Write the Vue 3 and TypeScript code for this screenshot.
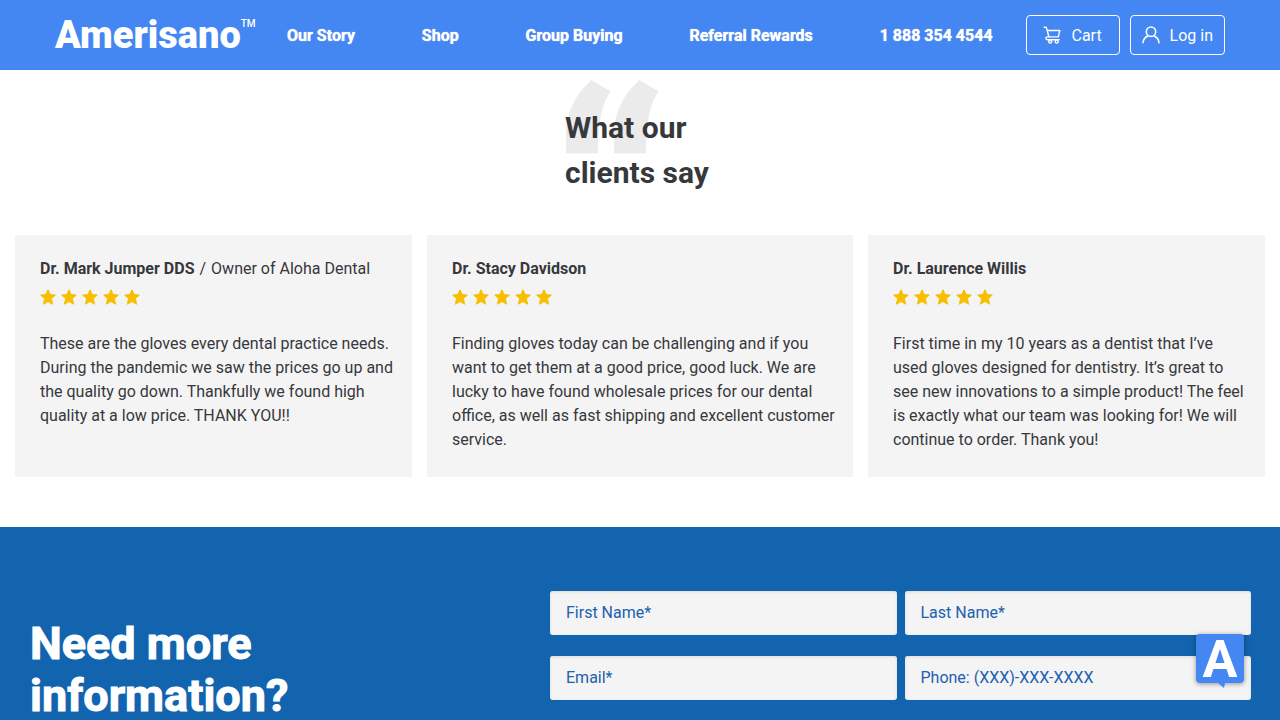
<script setup lang="ts">
interface Review {
  name: string
  role?: string
  text: string
}

interface Field {
  id: string
  type: string
  label: string
}

const links: string[] = ['Our Story', 'Shop', 'Group Buying', 'Referral Rewards', '1 888 354 4544']

const reviews: Review[] = [
  {
    name: 'Dr. Mark Jumper DDS',
    role: 'Owner of Aloha Dental',
    text: 'These are the gloves every dental practice needs. During the pandemic we saw the prices go up and the quality go down. Thankfully we found high quality at a low price. THANK YOU!!',
  },
  {
    name: 'Dr. Stacy Davidson',
    text: 'Finding gloves today can be challenging and if you want to get them at a good price, good luck. We are lucky to have found wholesale prices for our dental office, as well as fast shipping and excellent customer service.',
  },
  {
    name: 'Dr. Laurence Willis',
    text: 'First time in my 10 years as a dentist that I’ve used gloves designed for dentistry. It’s great to see new innovations to a simple product! The feel is exactly what our team was looking for! We will continue to order. Thank you!',
  },
]

const fields: Field[] = [
  { id: 'first-name', type: 'text', label: 'First Name*' },
  { id: 'last-name', type: 'text', label: 'Last Name*' },
  { id: 'email', type: 'email', label: 'Email*' },
  { id: 'phone', type: 'tel', label: 'Phone: (XXX)-XXX-XXXX' },
]
</script>

<template>
  <div class="page">
    <header class="header">
      <a class="logo" href="#"><span class="wordmark">Amerisano</span><span class="tm">TM</span></a>
      <nav class="nav">
        <a v-for="link in links" :key="link" href="#">{{ link }}</a>
      </nav>
      <div class="actions">
        <button type="button" class="action">
          <svg width="18" height="18" viewBox="0 0 18 18" fill="none" stroke="currentColor" stroke-width="1.4" stroke-linecap="round" stroke-linejoin="round">
            <path d="M1.200 1.200h1.300c.6 0 .9.3 1.100.9l.6 2.400h12.600l-1.500 6.400H5.900L4.200 4.500" />
            <path d="M5.900 10.900H4.500c-2.200 0-2.200 2.900 0 2.900h11.700" />
            <circle cx="7.200" cy="15.600" r="1.500" />
            <circle cx="13.700" cy="15.600" r="1.500" />
          </svg>
          <span>Cart</span>
        </button>
        <button type="button" class="action">
          <svg width="18" height="18" viewBox="0 0 18 18" fill="none" stroke="currentColor" stroke-width="1.6" stroke-linecap="round">
            <circle cx="9" cy="5.700" r="4.700" />
            <path d="M1 16.800c.3-3.400 2.300-5.800 5.200-7.100M17 16.800c-.3-3.400-2.300-5.800-5.200-7.100" />
          </svg>
          <span>Log in</span>
        </button>
      </div>
    </header>

    <section class="clients">
      <div class="title">
        <svg class="quote" width="94" height="74" viewBox="0 0 94 74" aria-hidden="true">
          <path d="M26.500 0 45.500 11.500C37 24 33 41 33 73.500H1V55C1 32 11 14 26.500 0Z" />
          <path d="M74.500 0 93.500 11.500C85 24 81 41 81 73.500H49V55C49 32 59 14 74.500 0Z" />
        </svg>
        <h2>What our<br />clients say</h2>
      </div>
      <div class="cards">
        <article v-for="review in reviews" :key="review.name" class="card">
          <h3>
            <strong>{{ review.name }}</strong>
            <template v-if="review.role"><span>/</span><span>{{ review.role }}</span></template>
          </h3>
          <div class="stars" role="img" aria-label="5 stars">
            <svg v-for="n in 5" :key="n" width="16" height="16" viewBox="0 0 16 16">
              <path d="M8 .8 10.100 5.600 15.300 6.100 11.400 9.600 12.600 15.200 8 12.500 3.400 15.200 4.600 9.600.7 6.100 5.900 5.600Z" />
            </svg>
          </div>
          <p>{{ review.text }}</p>
        </article>
      </div>
    </section>

    <section class="contact">
      <h2>Need more<br />information?</h2>
      <form class="form" @submit.prevent>
        <input v-for="field in fields" :id="field.id" :key="field.id" :type="field.type" :placeholder="field.label" :aria-label="field.label" />
      </form>
    </section>

    <button type="button" class="chat" aria-label="Open chat">
      <svg class="tail" width="8" height="6" viewBox="0 0 8 6" aria-hidden="true"><path d="M0 0H7L6 5Z" /></svg>
      <span>A</span>
    </button>
  </div>
</template>

<style>
body {
  margin: 0;
  background: #fff;
}
</style>

<style scoped>
.page {
  min-height: 100vh;
  display: flex;
  flex-direction: column;
  box-sizing: border-box;
  font-family: Roboto, "Liberation Sans", sans-serif;
  font-size: 16px;
  color: #37383c;
}

.header {
  height: 70px;
  box-sizing: border-box;
  padding: 0 55px;
  display: flex;
  align-items: center;
  background: #4487f2;
  color: #fff;
}

a {
  color: inherit;
  text-decoration: none;
}

.logo {
  width: 200px;
  display: flex;
  justify-content: space-between;
  align-items: flex-start;
  line-height: 46px;
}

.wordmark {
  font-size: 38px;
  font-weight: 900;
}

.tm {
  font-size: 10px;
  font-weight: 500;
  line-height: 24px;
}

.nav {
  flex: 1;
  margin: 0 33px 0 32px;
  display: flex;
  justify-content: space-between;
  font-weight: 700;
  text-shadow: 0 0 1px #fff;
  white-space: nowrap;
}

.actions {
  display: flex;
  gap: 10px;
}

.action {
  height: 40px;
  min-width: 94px;
  box-sizing: border-box;
  padding: 0 11px;
  display: flex;
  align-items: center;
  justify-content: center;
  gap: 10px;
  border: 1px solid #fff;
  border-radius: 4px;
  background: transparent;
  color: inherit;
  font: inherit;
}

.clients {
  padding: 35px 15px 50px;
}

.title {
  width: 150px;
  margin: 0 auto 40px;
  position: relative;
}

.quote {
  position: absolute;
  top: -25px;
  left: 0;
  fill: #ebebeb;
}

.title h2 {
  position: relative;
  margin: 0;
  font-size: 30px;
  line-height: 45px;
  font-weight: 700;
}

.cards {
  display: grid;
  grid-template-columns: 397fr 426fr 397fr;
  gap: 15px;
}

.card {
  padding: 25px 15px 25px 25px;
  background: #f4f4f4;
}

.card h3 {
  margin: 0;
  display: flex;
  gap: 5px;
  font-size: 16px;
  line-height: 18px;
  font-weight: 400;
}

.card strong {
  font-weight: 700;
}

.stars {
  margin: 11px 0 27px;
  display: flex;
  gap: 5px;
}

.stars path {
  fill: #f6bf00;
  stroke: #f6bf00;
  stroke-width: 1;
  stroke-linejoin: round;
}

.card p {
  margin: 0;
  line-height: 24px;
}

.contact {
  flex: 1;
  padding: 64px 29px 0 30px;
  display: grid;
  grid-template-columns: 520fr 701fr;
  align-items: start;
  background: #1264ae;
}

.contact h2 {
  margin: 27px 0 0;
  color: #fff;
  font-size: 45px;
  line-height: 52px;
  font-weight: 700;
  -webkit-text-stroke: 1px #fff;
}

.form {
  display: grid;
  grid-template-columns: 1fr 1fr;
  gap: 21px 8px;
}

.form input {
  width: 100%;
  height: 44px;
  box-sizing: border-box;
  padding: 0 16px 1px;
  border: 0;
  border-radius: 3px;
  background: #f4f4f4;
  box-shadow: inset 0 1px 3px #d9d9d9;
  color: #1264ae;
  font: inherit;
}

.form input::placeholder {
  color: #2160ae;
  opacity: 1;
}

.chat {
  position: fixed;
  right: 36px;
  bottom: 37px;
  width: 48px;
  height: 49px;
  padding: 0;
  border: 0;
  border-radius: 4px;
  background: #4487f2;
  box-shadow: 0 1px 5px rgba(0, 0, 0, 0.4);
  color: #fff;
  font: 700 52px/51px Roboto, "Liberation Sans", sans-serif;
}

.tail {
  position: absolute;
  top: 100%;
  left: 22px;
  fill: #4487f2;
}
</style>
